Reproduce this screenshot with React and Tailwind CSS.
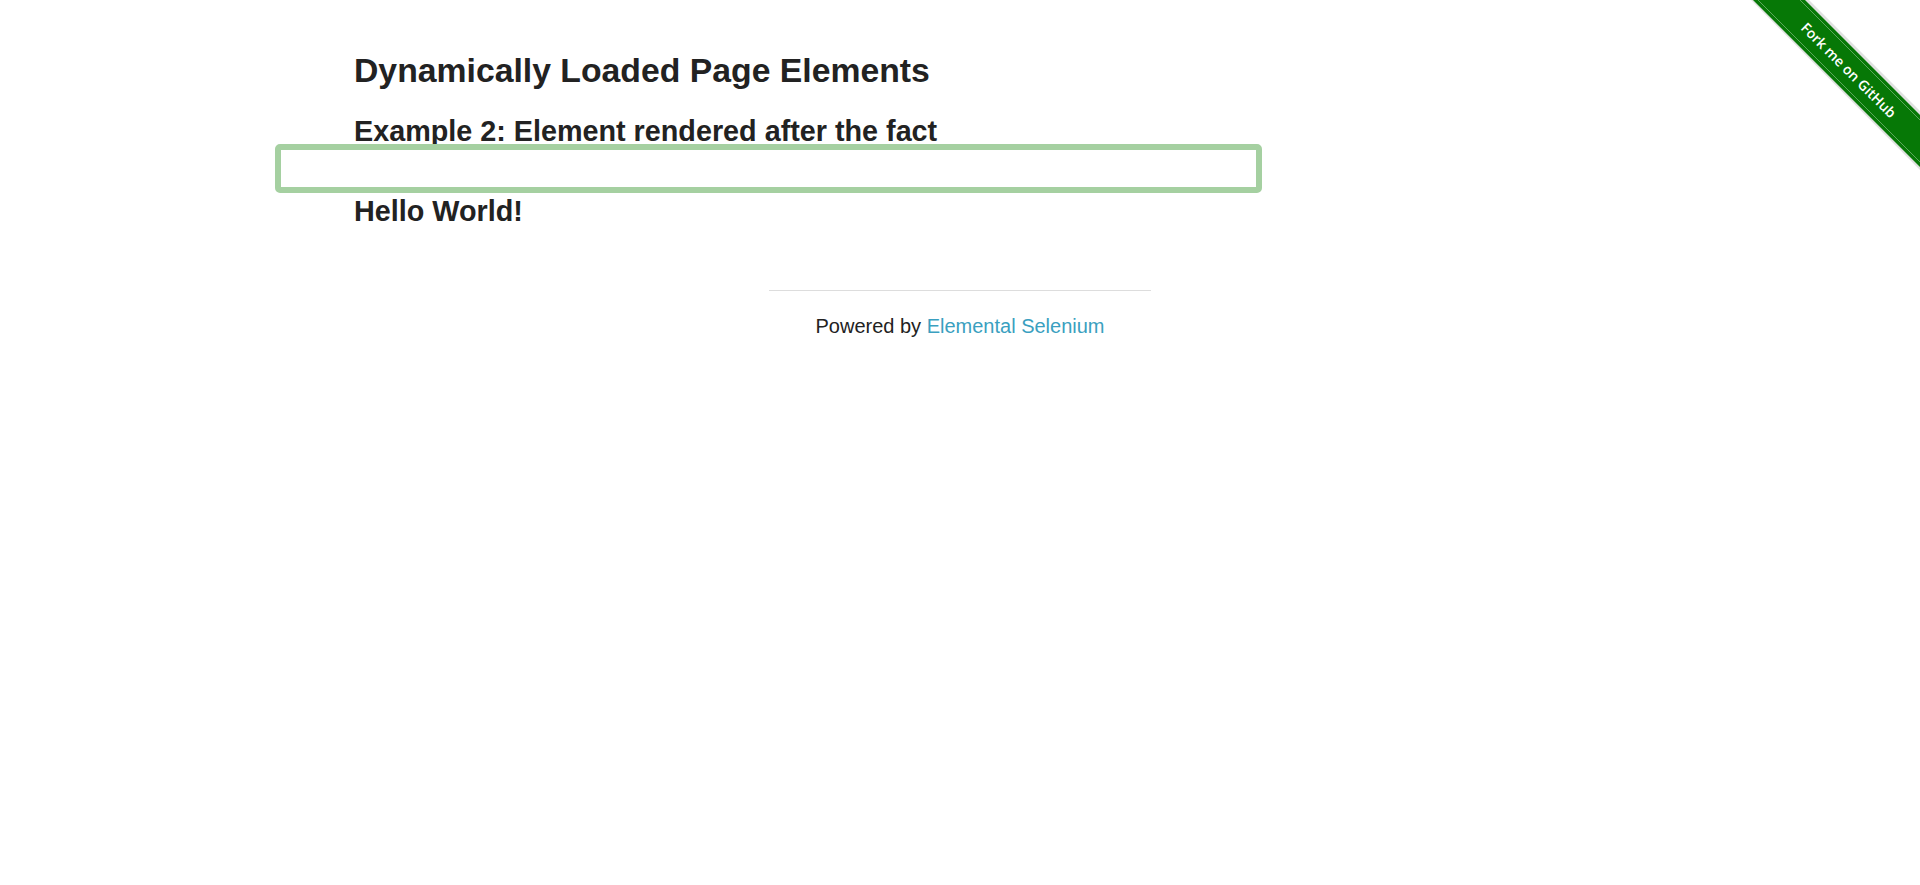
import React from 'react';

// GitHub "Fork me" ribbon, top right corner
function ForkRibbon() {
  return (
    <a href="#" className="absolute top-0 right-0 block">
      <svg width="186" height="186" viewBox="0 0 186 186">
        {/* soft shadow under the band */}
        <polygon points="17,0 75,0 186,111 186,170" fill="rgba(0,0,0,0.12)" />
        <polygon points="19,0 71,0 186,115 186,167" fill="#067806" />
        <line x1="24" y1="0" x2="186" y2="162" stroke="rgba(255,255,255,0.35)" strokeWidth="1" />
        <line x1="66" y1="0" x2="186" y2="120" stroke="rgba(255,255,255,0.35)" strokeWidth="1" />
        <text
          x="115"
          y="70"
          transform="rotate(45 115 70)"
          textAnchor="middle"
          dominantBaseline="central"
          fill="#ffffff"
          fontFamily="'Open Sans', 'Liberation Sans', sans-serif"
          fontWeight="600"
          fontSize="14"
        >
          Fork me on GitHub
        </text>
      </svg>
    </a>
  );
}

export default function App() {
  return (
    <div className="relative min-h-[885px] bg-white font-['Liberation_Sans',Arial,sans-serif] text-[#222222]">
      <div className="ml-[275px] w-[987px] pt-[50px]">
        <h3 className="pl-[79px] text-[33.75px] font-bold leading-[40px]">
          Dynamically Loaded Page Elements
        </h3>
        <h4 className="mt-[24px] pl-[79px] text-[28.75px] font-bold leading-[34px]">
          Example 2: Element rendered after the fact
        </h4>
        {/* highlighted element */}
        <div className="relative -mt-[4px] h-[49px] rounded-[5px] border-[6px] border-[#a5d0a1]" />
        <h4 className="mt-[1px] pl-[79px] text-[28.75px] font-bold leading-[34px]">
          Hello World!
        </h4>
      </div>

      {/* Footer */}
      <div className="mx-auto mt-[62px] w-[382px] border-t border-[#dddddd] pt-[23px] text-center text-[20px] leading-[24px]">
        Powered by{' '}
        <a href="#" className="text-[#3a9fc0]">
          Elemental Selenium
        </a>
      </div>

      <ForkRibbon />
    </div>
  );
}
